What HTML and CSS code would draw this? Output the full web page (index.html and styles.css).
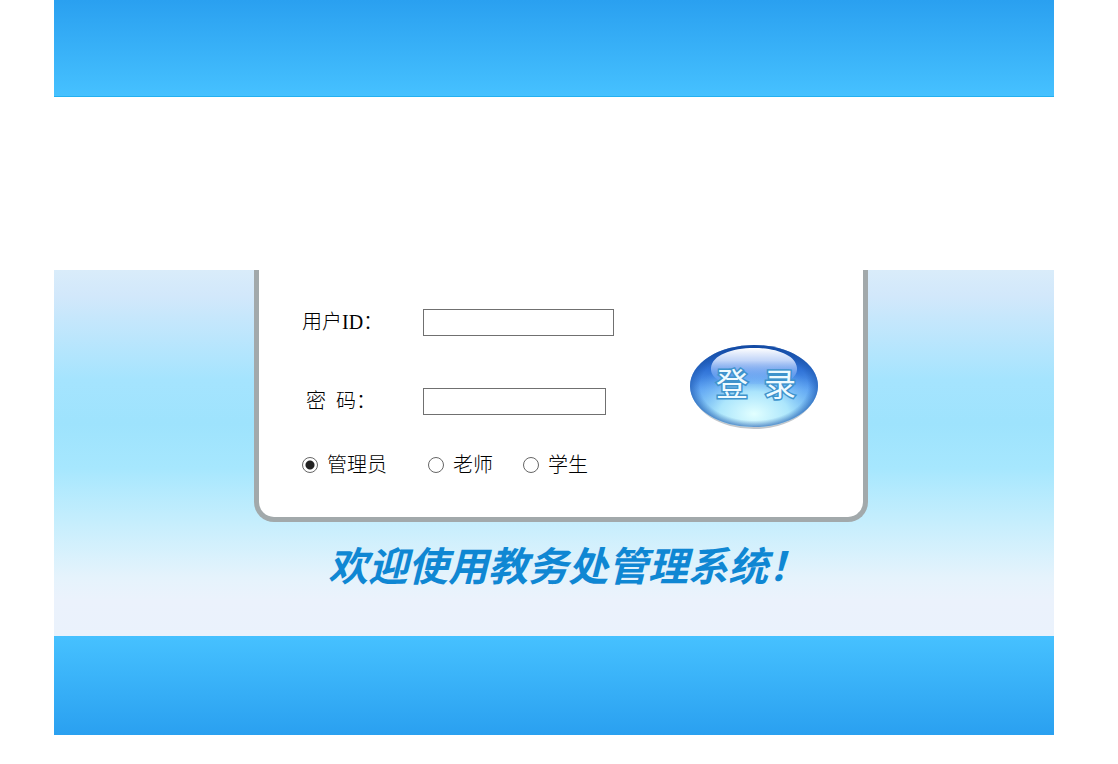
FILE: index.html
```html
<!DOCTYPE html>
<html lang="zh-CN">
<head>
<meta charset="UTF-8">
<meta name="viewport" content="width=device-width, initial-scale=1.0">
<title>教务处管理系统</title>
<link rel="stylesheet" href="styles.css">
</head>
<body>

<div class="page">
    <header class="top"></header>

    <main class="content">
        <form class="login">
            <div class="fields">
                <div class="row">
                    <label for="userId">用户ID：</label>
                    <input class="text user" type="text" id="userId" name="userId">
                </div>
                <div class="row">
                    <label class="pwd-label" for="password">密&nbsp; 码：</label>
                    <input class="text pwd" type="password" id="password" name="password">
                </div>
                <div class="roles">
                    <label><input type="radio" name="role" value="admin" checked>管理员</label>
                    <label><input type="radio" name="role" value="teacher">老师</label>
                    <label><input type="radio" name="role" value="student">学生</label>
                </div>
            </div>

            <button class="submit" type="submit">
                <svg width="130" height="86" viewBox="0 0 130 86">
                    <defs>
                        <linearGradient id="ball" x1="0" y1="0" x2="0" y2="1">
                            <stop offset="0" stop-color="#0a3f9c"/>
                            <stop offset="0.3" stop-color="#2f72d6"/>
                            <stop offset="0.55" stop-color="#5a9ff2"/>
                            <stop offset="1" stop-color="#7cc8f2"/>
                        </linearGradient>
                        <radialGradient id="glow" cx="0.5" cy="0.84" r="0.6">
                            <stop offset="0" stop-color="#e2ffff"/>
                            <stop offset="0.45" stop-color="#b4ecfd" stop-opacity="0.9"/>
                            <stop offset="1" stop-color="#6cb6f5" stop-opacity="0"/>
                        </radialGradient>
                        <radialGradient id="edge">
                            <stop offset="0.84" stop-color="#1b55ab" stop-opacity="0"/>
                            <stop offset="1" stop-color="#1b55ab" stop-opacity="0.6"/>
                        </radialGradient>
                        <linearGradient id="shine" x1="0" y1="0" x2="0" y2="1">
                            <stop offset="0" stop-color="#fff"/>
                            <stop offset="0.35" stop-color="#d3e2ff" stop-opacity="0.9"/>
                            <stop offset="1" stop-color="#68a4ff" stop-opacity="0.2"/>
                        </linearGradient>
                    </defs>
                    <ellipse cx="65" cy="44" rx="62" ry="40" fill="#c3c7cc"/>
                    <ellipse cx="65" cy="41" rx="64" ry="41" fill="url(#ball)"/>
                    <ellipse cx="65" cy="41" rx="64" ry="41" fill="url(#glow)"/>
                    <ellipse cx="65" cy="41" rx="64" ry="41" fill="url(#edge)"/>
                    <path d="M22 23C23 10 43 3 65 3s42 7 43 20c1 9-10 15-21 16H43C32 38 21 32 22 23z" fill="url(#shine)"/>
                    <text class="submit-text" x="43" y="51">登</text>
                    <text class="submit-text" x="91" y="51">录</text>
                </svg>
            </button>
        </form>

        <p class="welcome">欢迎使用教务处管理系统！</p>
    </main>

    <footer class="bottom"></footer>
</div>

</body>
</html>
```

FILE: styles.css
```css
body {
    margin: 0;
    padding: 0 10px 0 0;
    background-color: #fff;
    font-family: "Liberation Serif", "Noto Sans CJK SC", serif;
    font-size: 20px;
    font-weight: 300;
    color: #000;
}
.page {
    max-width: 1000px;
    margin: 0 auto;
}
.top {
    height: 96px;
    margin-bottom: 173px;
    background: linear-gradient(#2aa0f0, #46c1ff);
    border-bottom: 1px solid #24b0f0;
}
.content {
    padding: 0 0 46px 14px;
    background: linear-gradient(#d9ecfa, #d2e8fb 7%, #a5e4fe 30%, #9ee3fd 42%, #a6e7fe 54%, #c6eefd 69%, #e5f3fc 84%, #ebf2fc 90%, #eaf2fc);
}
.login {
    box-sizing: border-box;
    display: flex;
    justify-content: space-between;
    align-items: flex-start;
    max-width: 614px;
    margin: 0 auto;
    padding: 36px 44px 36px 43px;
    background-color: #fff;
    border: 5px solid #a2a9ab;
    border-top: none;
    border-radius: 0 0 20px 20px;
}
.row {
    display: grid;
    grid-template-columns: 121px auto;
    align-items: center;
    justify-content: start;
    height: 32px;
    margin-bottom: 47px;
}
.row label {
    padding-bottom: 4px;
}
.row .pwd-label {
    padding-left: 4px;
}
.text {
    box-sizing: border-box;
    height: 27px;
    padding: 1px 2px;
    border: 1px solid #707070;
    background-color: #fff;
    font-size: 20px;
}
.user {
    width: 191px;
}
.pwd {
    width: 183px;
}
.roles {
    display: grid;
    grid-template-columns: 126px 95px auto;
    justify-content: start;
    line-height: 32px;
    margin-top: -15px;
}
.roles label {
    display: flex;
    align-items: center;
    gap: 9px;
}
.roles input {
    appearance: none;
    width: 16px;
    height: 16px;
    margin: 0;
    border: 1px solid #666;
    border-radius: 50%;
    background-color: #fff;
}
.roles input:checked {
    background: radial-gradient(circle, #222 4px, #fff 5px);
}
.submit {
    margin-top: 39px;
    padding: 0;
    border: none;
    background: none;
    cursor: pointer;
}
.submit svg {
    display: block;
}
.submit-text {
    font-family: "Noto Sans CJK SC", sans-serif;
    font-size: 32px;
    font-weight: 400;
    fill: #eefaff;
    stroke: #3e93cc;
    stroke-width: 3px;
    paint-order: stroke;
    text-anchor: middle;
}
.welcome {
    margin: 16px 0 0;
    padding-left: 14px;
    font-family: "Noto Sans CJK SC", sans-serif;
    font-size: 40px;
    font-style: italic;
    font-weight: 700;
    line-height: 52px;
    text-align: center;
    color: #0f87d3;
}
.bottom {
    height: 99px;
    background: linear-gradient(#46c1ff, #2aa0f0);
}
```
